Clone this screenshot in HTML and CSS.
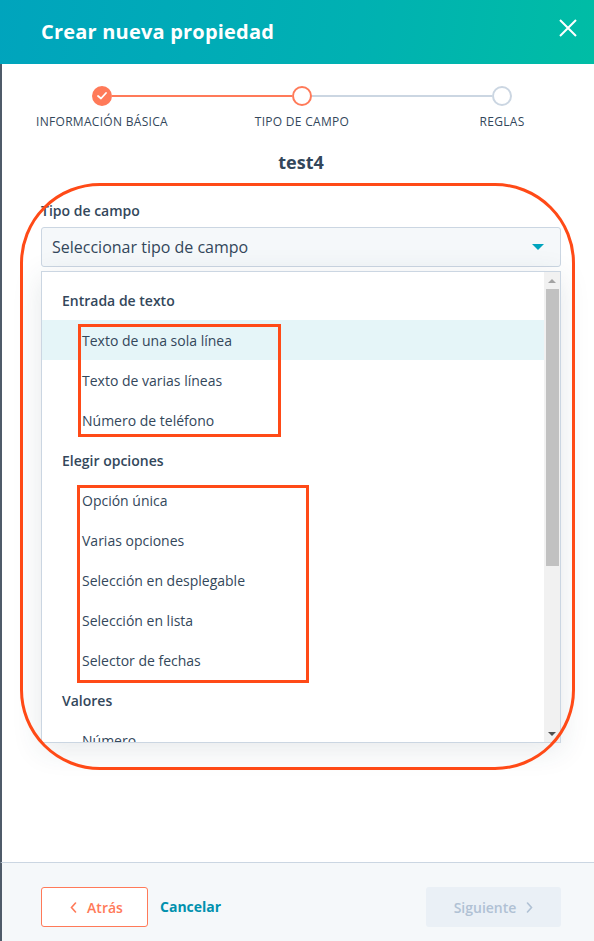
FILE: index.html
```html
<!doctype html>
<html>

<head>
	<meta charset="utf-8">
	<link rel="stylesheet" href="styles.css">
</head>

<body>
	<div class="panel">
		<header class="panel-header">
			<h1>Crear nueva propiedad</h1>
			<svg class="close" width="18" height="18" viewBox="0 0 18 18">
				<path d="M1 1L17 17M17 1L1 17" stroke="#fff" stroke-width="2" fill="none" />
			</svg>
		</header>

		<div class="panel-body">
			<div class="steps">
				<span class="dot done">
					<svg width="10" height="8" viewBox="0 0 10 8">
						<path d="M1 4L4 6.5L9 1" stroke="#fff" stroke-width="1.8" fill="none" stroke-linecap="round" stroke-linejoin="round" />
					</svg>
				</span>
				<span class="bar active"></span>
				<span class="dot current"></span>
				<span class="bar"></span>
				<span class="dot"></span>
			</div>
			<div class="step-labels">
				<span>Información básica</span>
				<span>Tipo de campo</span>
				<span>Reglas</span>
			</div>

			<h2 class="prop-name">test4</h2>

			<label class="field-label">Tipo de campo</label>
			<div class="select">
				<span>Seleccionar tipo de campo</span>
				<span class="caret"></span>
			</div>

			<div class="dropdown">
				<ul class="options">
					<li class="group">Entrada de texto</li>
					<li class="item hover">Texto de una sola línea</li>
					<li class="item">Texto de varias líneas</li>
					<li class="item">Número de teléfono</li>
					<li class="group">Elegir opciones</li>
					<li class="item">Opción única</li>
					<li class="item">Varias opciones</li>
					<li class="item">Selección en desplegable</li>
					<li class="item">Selección en lista</li>
					<li class="item">Selector de fechas</li>
					<li class="group">Valores</li>
					<li class="item">Número</li>
				</ul>
				<div class="scrollbar">
					<span class="arrow up"></span>
					<span class="thumb"></span>
					<span class="arrow down"></span>
				</div>
			</div>
		</div>

		<footer class="panel-footer">
			<button type="button" class="btn back">
				<svg width="7" height="11" viewBox="0 0 7 11">
					<path d="M5.5 1L1.5 5.5L5.5 10" stroke="#ff7a59" stroke-width="1.6" fill="none" stroke-linecap="round" />
				</svg>
				Atrás
			</button>
			<a class="cancel">Cancelar</a>
			<button type="button" class="btn next" disabled>
				Siguiente
				<svg width="7" height="11" viewBox="0 0 7 11">
					<path d="M1.5 1L5.5 5.5L1.5 10" stroke="#b0c1d4" stroke-width="1.6" fill="none" stroke-linecap="round" />
				</svg>
			</button>
		</footer>
	</div>

	<!-- annotation marks drawn over the screenshot -->
	<div class="mark mark-big"></div>
	<div class="mark mark-text"></div>
	<div class="mark mark-choice"></div>
</body>

</html>
```

FILE: styles.css
```css
body {
	margin: 0;
	font-family: "Open Sans", "Noto Sans", sans-serif;
	color: #33475b;
	background: #fff;
	position: relative;
}

.panel {
	height: 941px;
	display: flex;
	flex-direction: column;
}

.panel-header {
	height: 64px;
	flex: none;
	display: flex;
	align-items: center;
	justify-content: space-between;
	padding: 0 17px 0 41px;
	background: linear-gradient(100deg, #00a4bd 0%, #00b1b2 60%, #00bda5 100%);
}

.panel-header h1 {
	margin: 0 0 2px;
	font-size: 20px;
	font-weight: 700;
	color: #fff;
	letter-spacing: .2px;
}

.close {
	margin-bottom: 8px;
}

.panel-body {
	flex: 1;
	border-left: 2px solid #4f5b69;
	padding: 22px 33px 0 39px;
	display: flex;
	flex-direction: column;
}

/* stepper */
.steps {
	display: flex;
	align-items: center;
	margin-left: 51px;
	height: 20px;
}

.dot {
	width: 20px;
	height: 20px;
	box-sizing: border-box;
	border-radius: 50%;
	border: 2px solid #cbd6e2;
	background: #fff;
	display: flex;
	align-items: center;
	justify-content: center;
}

.dot.done {
	background: #ff7a59;
	border-color: #ff7a59;
}

.dot.current {
	border-color: #ff7a59;
}

.bar {
	width: 180px;
	height: 2px;
	background: #cbd6e2;
}

.bar.active {
	background: #ff7a59;
}

.step-labels {
	display: grid;
	grid-template-columns: repeat(3, 160px);
	column-gap: 40px;
	margin-left: -19px;
	margin-top: 8px;
	font-size: 12px;
	line-height: 16px;
	letter-spacing: .3px;
	text-transform: uppercase;
	text-align: center;
	white-space: nowrap;
}

.prop-name {
	margin: 20px 0 0;
	font-size: 18px;
	line-height: 24px;
	font-weight: 700;
	text-align: center;
}

.field-label {
	margin-top: 27px;
	font-size: 14px;
	line-height: 20px;
	font-weight: 600;
}

.select {
	margin-top: 6px;
	height: 40px;
	box-sizing: border-box;
	border: 1px solid #cbd6e2;
	border-radius: 3px;
	background: #f5f8fa;
	display: flex;
	align-items: center;
	justify-content: space-between;
	padding: 0 16px 0 10px;
	font-size: 16px;
}

.caret {
	width: 0;
	height: 0;
	border-left: 6px solid transparent;
	border-right: 6px solid transparent;
	border-top: 6px solid #00a4bd;
}

/* dropdown list */
.dropdown {
	margin-top: 4px;
	height: 472px;
	box-sizing: border-box;
	border: 1px solid #cbd6e2;
	display: flex;
	background: #fff;
	box-shadow: 0 6px 28px rgba(45, 62, 80, .12);
}

.options {
	flex: 1;
	list-style: none;
	margin: 0;
	padding: 8px 0 0;
	overflow: hidden;
	font-size: 14px;
}

.options li {
	height: 40px;
	display: flex;
	align-items: center;
}

.group {
	padding-left: 20px;
	font-weight: 600;
}

.item {
	padding-left: 40px;
}

.item.hover {
	background: #e5f5f8;
}

.scrollbar {
	width: 16px;
	background: #f1f1f1;
	display: flex;
	flex-direction: column;
	align-items: center;
}

.arrow {
	width: 0;
	height: 0;
	border-left: 4px solid transparent;
	border-right: 4px solid transparent;
}

.arrow.up {
	margin-top: 7px;
	border-bottom: 4px solid #a3a3a3;
}

.thumb {
	width: 13px;
	height: 277px;
	margin-top: 6px;
	background: #c1c1c1;
}

.arrow.down {
	margin-top: auto;
	margin-bottom: 6px;
	border-top: 4px solid #505050;
}

/* footer */
.panel-footer {
	flex: none;
	height: 79px;
	box-sizing: border-box;
	border-top: 1px solid #cbd6e2;
	border-left: 2px solid #4f5b69;
	background: #f5f8fa;
	padding: 24px 33px 0 39px;
	display: flex;
	align-items: flex-start;
}

.btn {
	height: 40px;
	box-sizing: border-box;
	border-radius: 3px;
	font-family: inherit;
	font-size: 14px;
	font-weight: 600;
	display: flex;
	align-items: center;
	gap: 10px;
}

.btn.back {
	width: 107px;
	justify-content: center;
	padding: 0 0 0 4px;
	border: 1px solid #ff7a59;
	background: #fff;
	color: #ff7a59;
}

.cancel {
	margin-left: 12px;
	line-height: 40px;
	font-size: 14px;
	font-weight: 700;
	color: #0091ae;
}

.btn.next {
	margin-left: auto;
	width: 135px;
	justify-content: center;
	border: none;
	background: #eaf0f6;
	color: #b0c1d4;
}

/* annotations */
.mark {
	position: absolute;
	box-sizing: border-box;
	border: 3px solid #ff4a17;
}

.mark-big {
	left: 20px;
	top: 183px;
	width: 555px;
	height: 587px;
	border-radius: 80px;
}

.mark-text {
	left: 78px;
	top: 324px;
	width: 203px;
	height: 113px;
}

.mark-choice {
	left: 77px;
	top: 485px;
	width: 232px;
	height: 198px;
}
```
